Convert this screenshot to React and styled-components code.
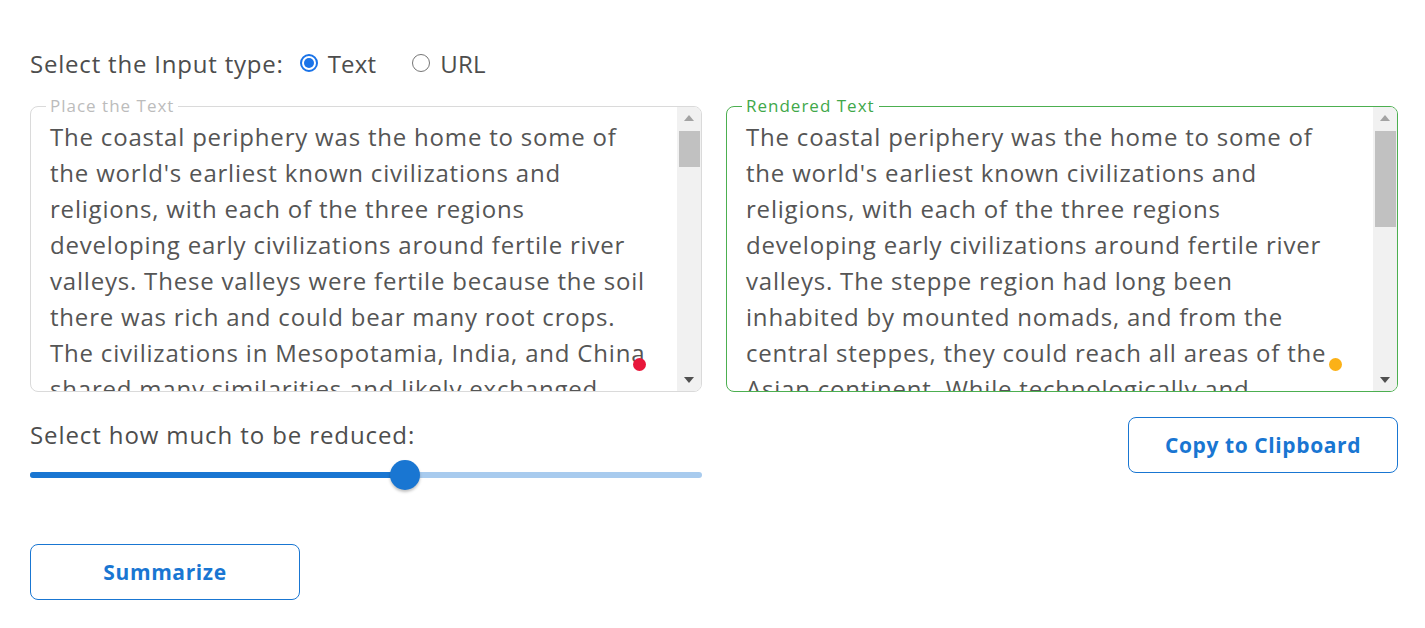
import React from 'react';
import styled, { createGlobalStyle } from 'styled-components';

const GlobalStyle = createGlobalStyle`
  body {
    margin: 0;
    background: #fff;
    font-family: 'Open Sans', 'Liberation Sans', sans-serif;
  }
`;

const Page = styled.div`
  display: grid;
  grid-template-columns: 672px 672px;
  column-gap: 24px;
  padding: 48px 0 0 30px;
`;

const InputTypeRow = styled.div`
  grid-column: 1 / -1;
  display: flex;
  align-items: center;
  height: 30px;
  font-size: 24px;
  color: #4d4d4d;
`;

const RowLabel = styled.span`
  letter-spacing: 0.8px;
  margin-right: 16px;
`;

const RadioOption = styled.label`
  display: flex;
  align-items: center;
  gap: 10px;
  margin-right: 36px;
  letter-spacing: 0.2px;
`;

const RadioDot = styled.span`
  width: 18px;
  height: 18px;
  box-sizing: border-box;
  border-radius: 50%;
  border: ${(p) => (p.checked ? '2px solid #1a73e8' : '1.5px solid #767676')};
  display: flex;
  align-items: center;
  justify-content: center;
  &::after {
    content: '';
    width: 10px;
    height: 10px;
    border-radius: 50%;
    background: ${(p) => (p.checked ? '#1a73e8' : 'transparent')};
  }
`;

const Box = styled.div`
  position: relative;
  margin-top: 28px;
  height: 286px;
  box-sizing: border-box;
  border: 1px solid ${(p) => (p.green ? '#4caf50' : '#dadada')};
  border-radius: 8px;
  display: flex;
`;

const BoxLabel = styled.span`
  position: absolute;
  top: -12px;
  left: 15px;
  padding: 0 4px;
  background: #fff;
  font-size: 17px;
  letter-spacing: 1px;
  line-height: 22px;
  color: ${(p) => (p.green ? '#3fa84a' : '#bcbcbc')};
`;

const BoxText = styled.div`
  flex: 1;
  overflow: hidden;
  padding: 12px 0 0 19px;
  font-size: 24px;
  letter-spacing: 0.8px;
  line-height: 36px;
  color: #555;
  white-space: pre;
`;

const Scrollbar = styled.div`
  flex: none;
  width: 24px;
  background: #f1f1f1;
  border-radius: 0 7px 7px 0;
  display: flex;
  flex-direction: column;
  align-items: center;
`;

const Arrow = styled.div`
  height: 22px;
  display: flex;
  align-items: center;
  justify-content: center;
`;

const Thumb = styled.div`
  width: 21px;
  height: ${(p) => p.size}px;
  background: #c1c1c1;
  margin-top: 2px;
  margin-bottom: auto;
`;

const Dot = styled.span`
  position: absolute;
  right: ${(p) => p.right}px;
  bottom: 20px;
  width: 13px;
  height: 13px;
  border-radius: 50%;
  background: ${(p) => p.color};
`;

const SliderBlock = styled.div`
  margin-top: 25px;
`;

const SliderLabel = styled.div`
  font-size: 24px;
  letter-spacing: 0.9px;
  line-height: 36px;
  color: #4d4d4d;
`;

const SliderArea = styled.div`
  position: relative;
  margin-top: 7px;
  height: 30px;
  display: flex;
  align-items: center;
`;

const Track = styled.div`
  flex: 1;
  height: 6px;
  border-radius: 3px;
  background: #a8cbee;
  display: flex;
`;

const Fill = styled.div`
  height: 100%;
  border-radius: 3px;
  background: #1976d2;
`;

const Knob = styled.div`
  position: absolute;
  top: 0;
  width: 30px;
  height: 30px;
  margin-left: -15px;
  border-radius: 50%;
  background: #1976d2;
  box-shadow: 0 2px 3px rgba(0, 0, 0, 0.25);
`;

const OutlineButton = styled.button`
  width: 270px;
  height: 56px;
  border: 1px solid #1976d2;
  border-radius: 8px;
  background: #fff;
  color: #1976d2;
  font-family: 'Open Sans', 'Liberation Sans', sans-serif;
  font-weight: 700;
  font-size: 21px;
  letter-spacing: 0.6px;
  cursor: pointer;
`;

const CopyButton = styled(OutlineButton)`
  margin-top: 25px;
  justify-self: end;
`;

const SummarizeButton = styled(OutlineButton)`
  margin-top: 54px;
`;

const leftText = `The coastal periphery was the home to some of
the world's earliest known civilizations and
religions, with each of the three regions
developing early civilizations around fertile river
valleys. These valleys were fertile because the soil
there was rich and could bear many root crops.
The civilizations in Mesopotamia, India, and China
shared many similarities and likely exchanged`;

const rightText = `The coastal periphery was the home to some of
the world's earliest known civilizations and
religions, with each of the three regions
developing early civilizations around fertile river
valleys. The steppe region had long been
inhabited by mounted nomads, and from the
central steppes, they could reach all areas of the
Asian continent. While technologically and`;

const Up = () => (
  <svg width="10" height="6" viewBox="0 0 10 6">
    <path d="M5 0L10 6H0z" fill="#a3a3a3" />
  </svg>
);

const Down = () => (
  <svg width="10" height="6" viewBox="0 0 10 6">
    <path d="M0 0H10L5 6z" fill="#505050" />
  </svg>
);

const TextPanel = ({ label, green, text, thumb, dotColor }) => (
  <Box green={green}>
    <BoxLabel green={green}>{label}</BoxLabel>
    <BoxText>{text}</BoxText>
    <Scrollbar>
      <Arrow>
        <Up />
      </Arrow>
      <Thumb size={thumb} />
      <Arrow>
        <Down />
      </Arrow>
    </Scrollbar>
    <Dot color={dotColor} right={55} />
  </Box>
);

const App = () => {
  const value = 55.8;
  return (
    <>
      <GlobalStyle />
      <Page>
        <InputTypeRow>
          <RowLabel>Select the Input type:</RowLabel>
          <RadioOption>
            <RadioDot checked />
            Text
          </RadioOption>
          <RadioOption>
            <RadioDot />
            URL
          </RadioOption>
        </InputTypeRow>

        <TextPanel label="Place the Text" text={leftText} thumb={36} dotColor="#e8173a" />
        <TextPanel label="Rendered Text" green text={rightText} thumb={96} dotColor="#fbb117" />

        <SliderBlock>
          <SliderLabel>Select how much to be reduced:</SliderLabel>
          <SliderArea>
            <Track>
              <Fill style={{ width: `${value}%` }} />
            </Track>
            <Knob style={{ left: `${value}%` }} />
          </SliderArea>
        </SliderBlock>
        <CopyButton>Copy to Clipboard</CopyButton>

        <SummarizeButton>Summarize</SummarizeButton>
      </Page>
    </>
  );
};

export default App;
